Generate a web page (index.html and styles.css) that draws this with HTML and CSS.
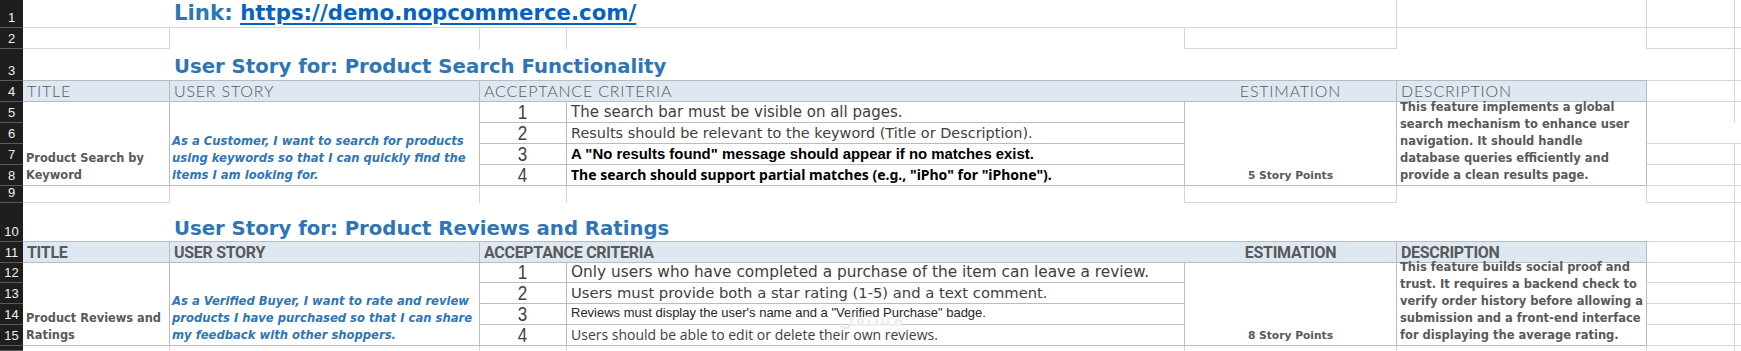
FILE: index.html
```html
<!DOCTYPE html>
<html lang="en">
<head>
<meta charset="utf-8">
<title>User Stories</title>
<link rel="stylesheet" href="styles.css">
</head>
<body>
<div class="sheet">
  <!-- Row 1 -->
  <div class="c rh">1</div>
  <div class="c b"></div>
  <div class="c r b w4 pl4 link-row"><span class="h-label">Link:&nbsp;</span><a class="url" href="#">https://demo.nopcommerce.com/</a></div>
  <div class="c r b"></div>
  <div class="c r b"></div>
  <div class="c b"></div>
  <!-- Row 2 -->
  <div class="c rh">2</div>
  <div class="c r b"></div>
  <div class="c r"></div>
  <div class="c r"></div>
  <div class="c r"></div>
  <div class="c r b"></div>
  <div class="c r"></div>
  <div class="c r b"></div>
  <div class="c b"></div>
  <!-- Row 3 -->
  <div class="c rh">3</div>
  <div class="c tb"></div>
  <div class="c tb w5 pl4 heading">User Story for: Product Search Functionality</div>
  <div class="c r b"></div>
  <div class="c b"></div>
  <!-- Row 4 header -->
  <div class="c rh">4</div>
  <div class="c tr tb hd hd1 pl4">TITLE</div>
  <div class="c tr tb hd hd1 pl4">USER STORY</div>
  <div class="c tb hd hd1 w2 pl4">ACCEPTANCE CRITERIA</div>
  <div class="c tr tb hd hd1 center">ESTIMATION</div>
  <div class="c tr tb hd hd1 pl4">DESCRIPTION</div>
  <div class="c r b"></div>
  <div class="c b"></div>
  <!-- Rows 5-8 -->
  <div class="c rh">5</div>
  <div class="c tr tb tall title-cell"><div>Product Search by<br>Keyword</div></div>
  <div class="c tr tb tall story"><div>As a Customer, I want to search for products<br>using keywords so that I can quickly find the<br>items I am looking for.</div></div>
  <div class="c tr tb num"><span>1</span></div>
  <div class="c tr tb crit k1 s150">The search bar must be visible on all pages.</div>
  <div class="c tr tb tall est">5 Story Points</div>
  <div class="c tr tb tall desc"><div>This feature implements a global<br>search mechanism to enhance user<br>navigation. It should handle<br>database queries efficiently and<br>provide a clean results page.</div></div>
  <div class="c r"></div>
  <div class="c"></div>
  <div class="c rh">6</div>
  <div class="c tr tb num"><span>2</span></div>
  <div class="c tr tb crit k1 s144">Results should be relevant to the keyword (Title or Description).</div>
  <div class="c b"></div>
  <div class="c b"></div>
  <div class="c rh">7</div>
  <div class="c tr tb num"><span>3</span></div>
  <div class="c tr tb crit k2">A "No results found" message should appear if no matches exist.</div>
  <div class="c r b"></div>
  <div class="c b"></div>
  <div class="c rh">8</div>
  <div class="c tr tb num"><span>4</span></div>
  <div class="c tr tb crit k3">The search should support partial matches (e.g., "iPho" for "iPhone").</div>
  <div class="c r b"></div>
  <div class="c b"></div>
  <!-- Row 9 -->
  <div class="c rh">9</div>
  <div class="c r b"></div>
  <div class="c r"></div>
  <div class="c r"></div>
  <div class="c r"></div>
  <div class="c r b"></div>
  <div class="c r"></div>
  <div class="c r b"></div>
  <div class="c b"></div>
  <!-- Row 10 -->
  <div class="c rh">10</div>
  <div class="c tb"></div>
  <div class="c tb w5 pl4 heading h2">User Story for: Product Reviews and Ratings</div>
  <div class="c r b"></div>
  <div class="c b"></div>
  <!-- Row 11 header -->
  <div class="c rh">11</div>
  <div class="c tr tb hd hd2 pl4">TITLE</div>
  <div class="c tr tb hd hd2 pl4">USER STORY</div>
  <div class="c tb hd hd2 w2 pl4">ACCEPTANCE CRITERIA</div>
  <div class="c tr tb hd hd2 center">ESTIMATION</div>
  <div class="c tr tb hd hd2 pl4">DESCRIPTION</div>
  <div class="c r b"></div>
  <div class="c b"></div>
  <!-- Rows 12-15 -->
  <div class="c rh">12</div>
  <div class="c tr tb tall title-cell"><div>Product Reviews and<br>Ratings</div></div>
  <div class="c tr tb tall story"><div>As a Verified Buyer, I want to rate and review<br>products I have purchased so that I can share<br>my feedback with other shoppers.</div></div>
  <div class="c tr tb num"><span>1</span></div>
  <div class="c tr tb crit k1 s153">Only users who have completed a purchase of the item can leave a review.</div>
  <div class="c tr tb tall est">8 Story Points</div>
  <div class="c tr tb tall desc"><div>This feature builds social proof and<br>trust. It requires a backend check to<br>verify order history before allowing a<br>submission and a front-end interface<br>for displaying the average rating.</div></div>
  <div class="c r b"></div>
  <div class="c b"></div>
  <div class="c rh">13</div>
  <div class="c tr tb num"><span>2</span></div>
  <div class="c tr tb crit k1 s147">Users must provide both a star rating (1-5) and a text comment.</div>
  <div class="c r b"></div>
  <div class="c b"></div>
  <div class="c rh">14</div>
  <div class="c tr tb num"><span>3</span></div>
  <div class="c tr tb crit k4">Reviews must display the user's name and a "Verified Purchase" badge.</div>
  <div class="c r b"></div>
  <div class="c b"></div>
  <div class="c rh">15</div>
  <div class="c tr tb num"><span>4</span></div>
  <div class="c tr tb crit k5">Users should be able to edit or delete their own reviews.</div>
  <div class="c r b"></div>
  <div class="c b"></div>
  <!-- Row 16 (partial) -->
  <div class="c rh"></div>
  <div class="c r"></div>
  <div class="c r"></div>
  <div class="c r"></div>
  <div class="c r"></div>
  <div class="c r"></div>
  <div class="c r"></div>
  <div class="c r"></div>
  <div class="c"></div>

  <span class="watermark">مستقل</span>
</div>
</body>
</html>
```
FILE: styles.css
```css
html, body {
  margin: 0;
  padding: 0;
  background: #ffffff;
}

body {
  font-family: "DejaVu Sans", "Liberation Sans", sans-serif;
  color: #404040;
}

.sheet {
  position: relative;
  display: grid;
  grid-template-columns: 23px 147px 310px 87px 618px 212px 250px 88px 1fr;
  grid-template-rows: 28px 21px 32px 21px 21px 21px 21px 21px 17px 39px 21px 20px 21px 21px 21px 5px;
  width: 1741px;
  height: 351px;
  overflow: hidden;
}

.c {
  box-sizing: border-box;
  display: flex;
  align-items: flex-end;
  min-width: 0;
  white-space: nowrap;
}

.r  { border-right: 1px solid #d6d6d6; }
.b  { border-bottom: 1px solid #d6d6d6; }
.tr { border-right: 1px solid #bcbcbc; }
.tb { border-bottom: 1px solid #bcbcbc; }

.w2 { grid-column: span 2; }
.w4 { grid-column: span 4; }
.w5 { grid-column: span 5; }
.tall { grid-row: span 4; }

.pl4 { padding-left: 4px; }
.center { justify-content: center; }

/* row headers */
.rh {
  background: #1e1e1e;
  color: #f0f0f0;
  font-family: "Liberation Sans", Arial, sans-serif;
  font-size: 13px;
  line-height: 13px;
  justify-content: center;
  padding-bottom: 3px;
  border-bottom: 1px solid #5a5a5a;
}

/* titles */
.link-row {
  font-family: "DejaVu Sans", sans-serif;
  font-weight: 700;
  font-size: 21.3px;
  line-height: 22px;
  padding-bottom: 3px;
}
.h-label { color: #2e75b6; }
.url {
  color: #0563c1;
  text-decoration: underline;
  text-decoration-thickness: 2px;
  text-underline-offset: 3px;
}

.heading {
  font-family: "DejaVu Sans", sans-serif;
  font-weight: 700;
  font-size: 19.7px;
  line-height: 22px;
  color: #2e75b6;
  padding-bottom: 2px;
}
.heading.h2 { padding-bottom: 1px; }

/* table header rows */
.hd {
  background: #dde8f3;
  color: #595959;
  line-height: 16px;
}
.hd1 {
  font-family: Lato, sans-serif;
  font-weight: 300;
  font-size: 16px;
  letter-spacing: 0.8px;
  padding-bottom: 2px;
}
.hd2 {
  font-family: "Liberation Sans Narrow", Roboto, sans-serif;
  font-weight: 700;
  font-size: 16px;
  padding-bottom: 1px;
  letter-spacing: -0.3px;
}

/* body cells */
.title-cell {
  font-family: "DejaVu Sans", sans-serif;
  font-weight: 700;
  font-size: 11.4px;
  line-height: 17px;
  color: #595959;
  padding: 0 0 1px 3px;
}

.story {
  font-family: "DejaVu Sans", sans-serif;
  font-weight: 700;
  font-style: italic;
  font-size: 11.6px;
  line-height: 17px;
  color: #2e75b6;
  padding: 0 0 1px 2px;
}

.num {
  justify-content: center;
  font-family: "Liberation Sans", Arial, sans-serif;
  font-size: 20px;
  line-height: 20px;
  color: #404040;
}
.num span {
  display: inline-block;
  transform: scaleX(0.85);
}

.crit {
  padding-left: 4px;
  padding-bottom: 2px;
}
.k1 {
  font-family: "DejaVu Sans", sans-serif;
  font-size: 15px;
  line-height: 16px;
  color: #404040;
}
.s150 { font-size: 15px; }
.s144 { font-size: 14.45px; }
.s153 { font-size: 15.35px; }
.s147 { font-size: 14.75px; }
.k2 {
  font-family: "Liberation Sans", Arial, sans-serif;
  font-weight: 700;
  font-size: 14.9px;
  line-height: 16px;
  color: #000000;
}
.k3 {
  font-family: "Noto Sans", sans-serif;
  font-weight: 700;
  font-size: 14px;
  line-height: 16px;
  color: #000000;
}
.k4 {
  font-family: "Liberation Sans", Arial, sans-serif;
  font-size: 13px;
  line-height: 16px;
  color: #262626;
  padding-bottom: 3px;
}
.k5 {
  font-family: "Open Sans", sans-serif;
  font-size: 14px;
  line-height: 16px;
  color: #404040;
}

.est {
  justify-content: center;
  font-family: "DejaVu Sans", sans-serif;
  font-weight: 700;
  font-size: 10.7px;
  line-height: 17px;
  color: #595959;
  padding-bottom: 1px;
}

.desc {
  font-family: "DejaVu Sans", sans-serif;
  font-weight: 700;
  font-size: 11.5px;
  line-height: 17px;
  color: #595959;
  padding: 0 0 1px 3px;
}

.watermark {
  position: absolute;
  left: 838px;
  top: 306px;
  font-family: "DejaVu Sans", sans-serif;
  font-size: 22px;
  color: #ececec;
  pointer-events: none;
}
```
